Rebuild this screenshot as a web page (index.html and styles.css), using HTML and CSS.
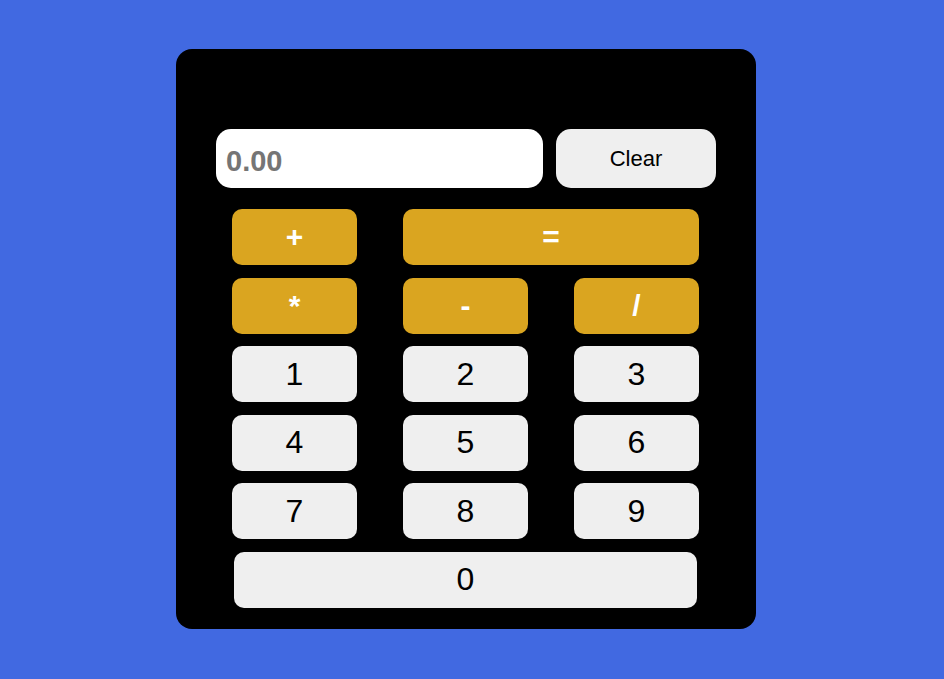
FILE: index.html
```html
<!DOCTYPE html>
<html>
<head>
<meta charset="utf-8">
<link rel="stylesheet" href="styles.css">
</head>
<body>
<div class="calc">
  <div class="top">
    <input class="display" type="text" placeholder="0.00">
    <button class="clear">Clear</button>
  </div>
  <div class="keys">
    <button class="key op">+</button>
    <button class="key op wide">=</button>
    <button class="key op">*</button>
    <button class="key op">-</button>
    <button class="key op">/</button>
    <button class="key">1</button>
    <button class="key">2</button>
    <button class="key">3</button>
    <button class="key">4</button>
    <button class="key">5</button>
    <button class="key">6</button>
    <button class="key">7</button>
    <button class="key">8</button>
    <button class="key">9</button>
    <button class="key zero">0</button>
  </div>
</div>
</body>
</html>
```

FILE: styles.css
```css
html, body {
  margin: 0;
  padding: 0;
}
body {
  background: #4169e1;
  width: 944px;
  height: 679px;
  font-family: "Liberation Sans", Arial, sans-serif;
}
.calc {
  box-sizing: border-box;
  width: 580px;
  height: 580px;
  margin: 49px 0 0 176px;
  background: #000;
  border-radius: 16px;
  padding: 80px 40px 0 40px;
}
.top {
  display: flex;
  gap: 13px;
  height: 59px;
}
.display {
  box-sizing: border-box;
  width: 327px;
  height: 59px;
  border: none;
  outline: none;
  border-radius: 15px;
  background: #fff;
  padding: 5px 0 0 10px;
  font-family: "Liberation Sans", Arial, sans-serif;
  font-weight: bold;
  font-size: 29px;
  color: #757575;
}
.display::placeholder {
  color: #757575;
  opacity: 1;
}
.clear {
  width: 160px;
  height: 59px;
  border: none;
  border-radius: 15px;
  background: #efefef;
  color: #000;
  font-family: "Liberation Sans", Arial, sans-serif;
  font-size: 22px;
  padding: 0;
}
.keys {
  display: grid;
  grid-template-columns: 125px 125px 125px;
  grid-auto-rows: 56px;
  column-gap: 46px;
  row-gap: 12.6px;
  margin: 21px 0 0 16px;
  width: 467px;
}
.key {
  border: none;
  border-radius: 10px;
  background: #efefef;
  color: #000;
  font-family: "Liberation Sans", Arial, sans-serif;
  font-size: 32px;
  padding: 0;
}
.op {
  background: #daa520;
  color: #fff;
  font-weight: bold;
  font-size: 30px;
}
.wide {
  grid-column: span 2;
}
.zero {
  grid-column: span 3;
  margin: 0 2px;
}
```
